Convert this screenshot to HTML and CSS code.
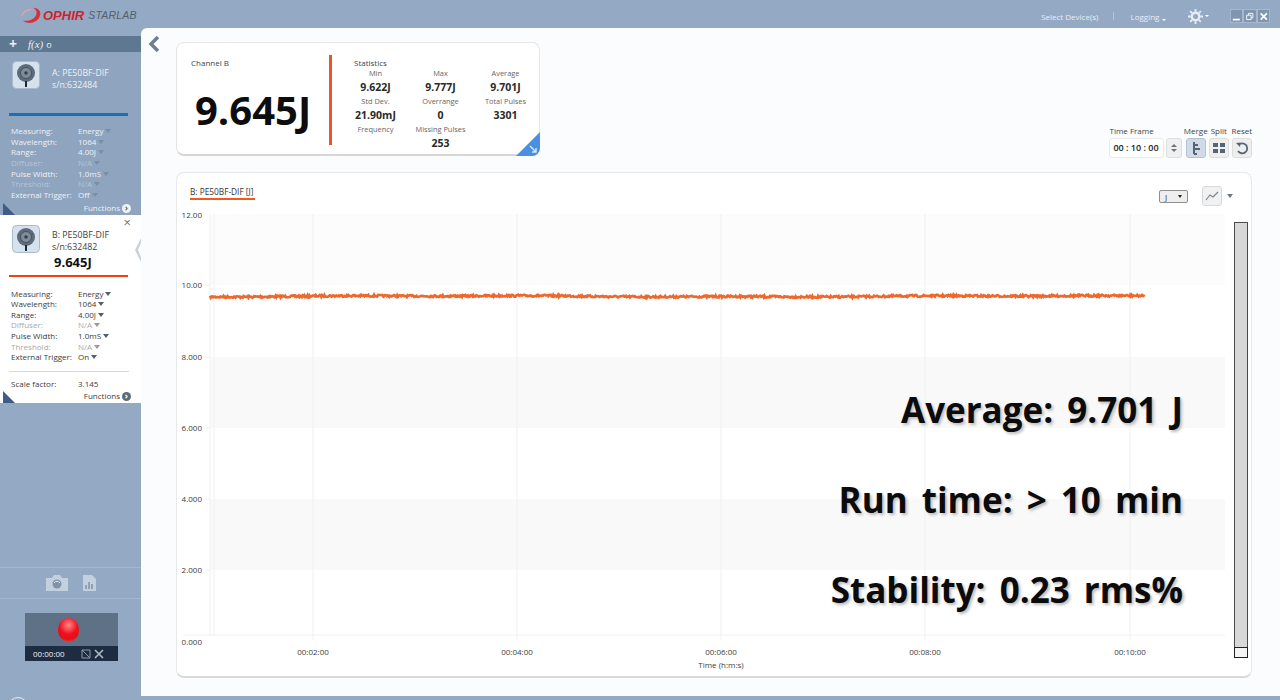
FILE: index.html
```html
<!DOCTYPE html>
<html lang="en">
<head>
    <meta charset="UTF-8">
    <title>StarLab</title>
    <link rel="stylesheet" href="styles.css">
</head>
<body>
    <svg class="defs" width="0" height="0">
        <symbol id="sensor" viewBox="0 0 28 28">
            <rect x="0.5" y="0.5" width="27" height="27" rx="4" fill="#d5e2ee" stroke="#a8bacb"/>
            <circle cx="14" cy="12" r="9" fill="#5d6b78"/>
            <circle cx="14" cy="12" r="5.5" fill="#7d8c99" stroke="#46525e"/>
            <circle cx="14" cy="12" r="1.8" fill="#38424c"/>
            <rect x="13" y="20" width="2" height="6" fill="#20262c"/>
        </symbol>
    </svg>

    <header class="topbar">
        <div class="logo">
            <svg class="logo-mark" width="22" height="22" viewBox="0 0 24 22">
                <path d="M2 17 C7 22 19 20 21 11 C22 6 18 3 13 3 C17 5 18 8 16 12 C13 17 6 18 2 17Z" fill="#d8313c"/>
                <path d="M1 12 C3 7 7 5 11 5" fill="none" stroke="#e8a0a4" stroke-width="1.5"/>
            </svg>
            <span class="logo-red">OPHIR</span>
            <span class="logo-grey">STARLAB</span>
        </div>
        <nav class="topnav">
            <span class="topnav-link">Select Device(s)</span>
            <span class="topnav-sep"></span>
            <span class="topnav-link">Logging <i class="mini-caret"></i></span>
            <span class="gear">
                <svg width="15" height="15" viewBox="0 0 16 16">
                    <circle cx="8" cy="8" r="4" fill="none" stroke="#e6ecf3" stroke-width="2.5"/>
                    <path d="M8 0V3M8 13V16M0 8H3M13 8H16M2.3 2.3L4.4 4.4M11.6 11.6L13.7 13.7M2.3 13.7L4.4 11.6M11.6 4.4L13.7 2.3" stroke="#e6ecf3" stroke-width="2"/>
                </svg>
                <i class="mini-caret"></i>
            </span>
            <div class="winbtns">
                <span class="winbtn"><svg width="13" height="13" viewBox="0 0 13 13"><path d="M2 10H10" stroke="#fff" stroke-width="2"/></svg></span>
                <span class="winbtn"><svg width="13" height="13" viewBox="0 0 13 13"><path d="M3 5H8V10H3ZM5 5V3H10V8H8" fill="none" stroke="#fff"/></svg></span>
                <span class="winbtn"><svg width="13" height="13" viewBox="0 0 13 13"><path d="M3 3L10 10M10 3L3 10" stroke="#fff" stroke-width="2"/></svg></span>
            </div>
        </nav>
    </header>

    <div class="app">
        <aside class="sidebar">
            <div class="side-tools">
                <span class="side-plus">+</span>
                <span class="side-fx">f(x)</span>
                <span class="side-o">o</span>
            </div>

            <section class="device device-a">
                <div class="device-head">
                    <svg class="sensor-icon" width="28" height="28"><use href="#sensor"/></svg>
                    <div class="device-name">
                        <div>A: PE50BF-DIF</div>
                        <div>s/n:632484</div>
                    </div>
                </div>
                <div class="device-bar bar-blue"></div>
                <dl class="params">
                    <dt>Measuring:</dt><dd>Energy<i class="caret"></i></dd>
                    <dt>Wavelength:</dt><dd>1064<i class="caret"></i></dd>
                    <dt>Range:</dt><dd>4.00J<i class="caret"></i></dd>
                    <dt class="off">Diffuser:</dt><dd class="off">N/A<i class="caret"></i></dd>
                    <dt>Pulse Width:</dt><dd>1.0mS<i class="caret"></i></dd>
                    <dt class="off">Threshold:</dt><dd class="off">N/A<i class="caret"></i></dd>
                    <dt>External Trigger:</dt><dd>Off<i class="caret"></i></dd>
                </dl>
                <div class="functions">Functions <i class="fn-dot">›</i></div>
                <i class="corner"></i>
            </section>

            <section class="device device-b">
                <span class="device-close">×</span>
                <i class="notch"></i>
                <div class="device-head">
                    <svg class="sensor-icon" width="28" height="28"><use href="#sensor"/></svg>
                    <div class="device-name">
                        <div>B: PE50BF-DIF</div>
                        <div>s/n:632482</div>
                        <div class="device-value">9.645J</div>
                    </div>
                </div>
                <div class="device-bar bar-orange"></div>
                <dl class="params">
                    <dt>Measuring:</dt><dd>Energy<i class="caret"></i></dd>
                    <dt>Wavelength:</dt><dd>1064<i class="caret"></i></dd>
                    <dt>Range:</dt><dd>4.00J<i class="caret"></i></dd>
                    <dt class="off">Diffuser:</dt><dd class="off">N/A<i class="caret"></i></dd>
                    <dt>Pulse Width:</dt><dd>1.0mS<i class="caret"></i></dd>
                    <dt class="off">Threshold:</dt><dd class="off">N/A<i class="caret"></i></dd>
                    <dt>External Trigger:</dt><dd>On<i class="caret"></i></dd>
                </dl>
                <div class="scale">
                    <span>Scale factor:</span><span>3.145</span>
                </div>
                <div class="functions">Functions <i class="fn-dot">›</i></div>
                <i class="corner"></i>
            </section>

            <div class="side-spacer"></div>

            <div class="side-actions">
                <svg width="24" height="18" viewBox="0 0 24 18">
                    <path d="M1 4H7L9 1H15L17 4H23V17H1Z" fill="#c3d0de"/>
                    <circle cx="12" cy="10" r="4.5" fill="#7f93a9"/>
                    <path d="M9 9A3.5 3.5 0 0 1 15 9" stroke="#dfe7ef" fill="none"/>
                </svg>
                <svg width="15" height="18" viewBox="0 0 15 18">
                    <path d="M1 1H10L14 5V17H1Z" fill="#c3d0de"/>
                    <path d="M4 15V11M7 15V8M10 15V10" stroke="#7f93a9" stroke-width="1.5"/>
                </svg>
            </div>

            <div class="recorder">
                <div class="rec-top"><span class="rec-ball"></span></div>
                <div class="rec-bottom">
                    <span>00:00:00</span>
                    <span class="rec-tools">
                        <svg width="10" height="10" viewBox="0 0 10 10"><path d="M1 1H9V9H1ZM1 1L9 9" fill="none" stroke="#8b99a8"/></svg>
                        <svg width="10" height="10" viewBox="0 0 10 10"><path d="M1 1L9 9M9 1L1 9" stroke="#aebbc8" stroke-width="1.6"/></svg>
                    </span>
                </div>
            </div>
        </aside>

        <main class="main">
            <svg class="back" width="14" height="18" viewBox="0 0 14 18">
                <path d="M11 2L4 9L11 16" fill="none" stroke="#6f7f90" stroke-width="3.5"/>
            </svg>

            <div class="main-head">
                <section class="stat-card">
                    <div class="stat-left">
                        <div class="small-title">Channel B</div>
                        <div class="big-value">9.645J</div>
                    </div>
                    <div class="stat-right">
                        <div class="small-title">Statistics</div>
                        <div class="stat-grid">
                            <div class="stat"><span>Min</span><b>9.622J</b></div>
                            <div class="stat"><span>Max</span><b>9.777J</b></div>
                            <div class="stat"><span>Average</span><b>9.701J</b></div>
                            <div class="stat"><span>Std Dev.</span><b>21.90mJ</b></div>
                            <div class="stat"><span>Overrange</span><b>0</b></div>
                            <div class="stat"><span>Total Pulses</span><b>3301</b></div>
                            <div class="stat"><span>Frequency</span></div>
                            <div class="stat"><span>Missing Pulses</span><b>253</b></div>
                        </div>
                    </div>
                    <span class="stat-corner">
                        <svg width="8" height="8" viewBox="0 0 8 8"><path d="M1 1L7 7M7 3V7H3" fill="none" stroke="#dbe9fa" stroke-width="1.4"/></svg>
                    </span>
                </section>

                <div class="controls">
                    <div class="ctl-time">
                        <label>Time Frame</label>
                        <div class="time-row">
                            <span class="time-box">00 : 10 : 00</span>
                            <span class="spin"><i class="spin-up"></i><i class="spin-down"></i></span>
                        </div>
                    </div>
                    <div class="ctl">
                        <label>Merge</label>
                        <span class="ctl-btn is-on">
                            <svg width="14" height="14" viewBox="0 0 14 14"><path d="M5 1V13M5 4H9M5 8H11M5 13H8" fill="none" stroke="#566574" stroke-width="2"/></svg>
                        </span>
                    </div>
                    <div class="ctl">
                        <label>Split</label>
                        <span class="ctl-btn">
                            <svg width="14" height="12" viewBox="0 0 14 12"><path d="M1 1H6V5H1ZM8 1H13V5H8ZM1 7H6V11H1ZM8 7H13V11H8Z" fill="#566574"/></svg>
                        </span>
                    </div>
                    <div class="ctl">
                        <label>Reset</label>
                        <span class="ctl-btn">
                            <svg width="14" height="14" viewBox="0 0 14 14"><path d="M3.5 4A5 5 0 1 1 3 10" fill="none" stroke="#566574" stroke-width="1.8"/><path d="M1 2L5.5 1.5L5 6Z" fill="#566574"/></svg>
                        </span>
                    </div>
                </div>
            </div>

            <section class="chart-card">
                <div class="chart-head">
                    <span class="legend">B: PE50BF-DIF [J]</span>
                    <div class="chart-tools">
                        <span class="unit-select">J <i class="caret caret-dark"></i></span>
                        <span class="type-btn">
                            <svg width="14" height="10" viewBox="0 0 14 10"><path d="M1 9L5 4L8 6L13 1" fill="none" stroke="#7b8792" stroke-width="1.2"/></svg>
                        </span>
                        <i class="caret caret-grey"></i>
                    </div>
                </div>
                <svg class="plot" id="plot" width="1076" height="470" viewBox="176 207 1076 470">
                    <rect class="band band-top" x="210" y="214" width="1015" height="71"/>
                    <rect class="band" x="210" y="357" width="1015" height="71"/>
                    <rect class="band" x="210" y="499" width="1015" height="71"/>
                    <path class="grid" d="M210 214V635M214 214V635M313 214V640M517 214V640M721 214V640M925 214V640M1130 214V640M205 285H210M205 357H210M205 428H210M205 499H210M205 570H210M183 635H1225"/>
                    <text class="ylab" x="202" y="218">12.00</text>
                    <text class="ylab" x="202" y="288">10.00</text>
                    <text class="ylab" x="202" y="360">8.000</text>
                    <text class="ylab" x="202" y="431">6.000</text>
                    <text class="ylab" x="202" y="502">4.000</text>
                    <text class="ylab" x="202" y="573">2.000</text>
                    <text class="ylab" x="202" y="645">0.000</text>
                    <text class="xlab" x="313" y="655">00:02:00</text>
                    <text class="xlab" x="517" y="655">00:04:00</text>
                    <text class="xlab" x="721" y="655">00:06:00</text>
                    <text class="xlab" x="925" y="655">00:08:00</text>
                    <text class="xlab" x="1130" y="655">00:10:00</text>
                    <text class="xlab" x="721" y="668">Time (h:m:s)</text>
                    <path class="series" id="series" d=""/>
                    <rect class="scroll" x="1234.5" y="222.5" width="13" height="435"/>
                    <rect class="scroll-thumb" x="1234.5" y="647.5" width="13" height="10"/>
                </svg>
                <div class="overlay">
                    <p>Average: 9.701 J</p>
                    <p>Run time: &gt; 10 min</p>
                    <p>Stability: 0.23 rms%</p>
                </div>
            </section>
        </main>
    </div>
    <span class="help-arc"></span>

    <script src="chart.js"></script>
</body>
</html>
```

FILE: styles.css
```css
:root {
    --side: #94a9c3;
    --side-dark: #5f7891;
    --orange: #f05a1e;
    --text: #333;
    --muted: #6d6d6d;
}

* {
    box-sizing: border-box;
}

html, body {
    height: 100%;
}

body {
    margin: 0;
    width: 1280px;
    height: 700px;
    overflow: hidden;
    position: relative;
    display: flex;
    flex-direction: column;
    background: var(--side);
    color: var(--text);
    font-family: "Open Sans", "Noto Sans", sans-serif;
    font-size: 8px;
}

.defs {
    position: absolute;
}

/* top bar */
.topbar {
    height: 28px;
    flex: none;
    display: flex;
    justify-content: space-between;
    align-items: center;
}

.logo {
    display: flex;
    align-items: center;
    padding: 0 0 0 21px;
    margin-top: 2px;
    font-family: "Liberation Sans", sans-serif;
    font-style: italic;
}

.logo-red {
    color: #d21f2b;
    font-size: 13px;
    font-weight: 700;
    margin-right: 4px;
}

.logo-grey {
    color: #51606f;
    font-size: 10.5px;
    letter-spacing: 0.2px;
}

.topnav {
    display: flex;
    align-items: center;
    color: #e8eef5;
    font-size: 8px;
    padding-right: 10px;
    height: 100%;
    padding-top: 4px;
}

.topnav-link {
    white-space: nowrap;
}

.topnav-sep {
    width: 1px;
    height: 8px;
    background: #b5c5d7;
    margin: 0 16px 0 15px;
}

.mini-caret {
    display: inline-block;
    border: 2.5px solid transparent;
    border-top-color: #fff;
    border-bottom: 0;
    vertical-align: -1px;
}

.gear {
    display: flex;
    align-items: center;
    gap: 2px;
    margin-left: 22px;
    margin-right: 21px;
}

.winbtns {
    display: flex;
}

.winbtn {
    width: 13.5px;
    height: 14px;
    background: #7f96b1;
    border: 1px solid #a6b8cd;
    display: flex;
    align-items: center;
    justify-content: center;
}

/* sidebar + main */
.app {
    flex: 1;
    display: flex;
    padding-bottom: 4px;
    min-height: 0;
}

.sidebar {
    width: 141px;
    flex: none;
    display: flex;
    flex-direction: column;
    padding-top: 8px;
}

.side-tools {
    height: 16px;
    flex: none;
    background: var(--side-dark);
    color: #e8eef4;
    display: flex;
    align-items: center;
    padding-left: 9px;
    gap: 11px;
    font-size: 9px;
}

.side-plus {
    font-size: 14px;
    font-weight: 700;
    line-height: 1;
}

.side-fx {
    font-family: "Liberation Serif", serif;
    font-style: italic;
    font-size: 11px;
    margin-right: -8px;
}

.device {
    position: relative;
    flex: none;
}

.device-a {
    height: 163px;
    color: #eef2f7;
    background: #8ea4bf;
}

.device-b {
    height: 188px;
    color: #3d3d3d;
    background: #fff;
}

.device-head {
    display: flex;
    padding: 10px 0 0 12px;
    gap: 12px;
    height: 61px;
}

.device-a .device-head {
    padding-top: 9px;
}

.device-b .device-head {
    height: 60px;
}

.device-name {
    font-size: 8.8px;
    line-height: 12px;
    padding-top: 6px;
}

.device-b .device-name {
    padding-top: 4px;
    line-height: 12px;
}

.device-value {
    font-size: 13px;
    font-weight: 700;
    color: #111;
    line-height: 18px;
    margin: 0 0 0 2px;
}

.device-bar {
    height: 3px;
    margin: 0 13px 0 9px;
}

.bar-blue {
    background: #1a70b8;
}

.bar-orange {
    background: #f2410f;
    height: 2px;
}

.params {
    display: grid;
    grid-template-columns: 67px 1fr;
    grid-auto-rows: 10.65px;
    margin: 10px 0 0 11px;
    font-size: 8px;
    line-height: 10.65px;
}

.device-b .params {
    margin-top: 11.5px;
}

.params dt,
.params dd {
    margin: 0;
    white-space: nowrap;
}

.device-a .off {
    color: #b4c4d6;
}

.device-b .off {
    color: #a8a8a8;
}

.caret {
    display: inline-block;
    border: 3px solid transparent;
    border-top: 4px solid #565f68;
    border-bottom: 0;
    margin-left: 2px;
    vertical-align: 1px;
}

.device-a .caret {
    border-top-color: #7d8ea2;
}

.device-b .off .caret {
    border-top-color: #9a9a9a;
}

.scale {
    margin: 8px 12px 0 9px;
    border-top: 1px solid #d8d8d8;
    padding: 7px 0 0 2px;
    display: grid;
    grid-template-columns: 67px 1fr;
    line-height: 10px;
}

.functions {
    position: absolute;
    right: 10px;
    bottom: 2px;
    display: flex;
    align-items: center;
    gap: 2px;
    font-size: 8px;
    line-height: 10px;
}

.fn-dot {
    width: 9px;
    height: 9px;
    border-radius: 50%;
    background: #5b6c7d;
    color: #fff;
    font-style: normal;
    font-weight: 700;
    font-size: 9px;
    line-height: 7px;
    text-align: center;
}

.device-a .fn-dot {
    background: #eef2f7;
    color: #5b6c7d;
}

.corner {
    position: absolute;
    left: 3px;
    bottom: 0;
    border-left: 12px solid #3f5c86;
    border-top: 12px solid transparent;
}

.device-close {
    position: absolute;
    right: 10px;
    top: 1px;
    font-size: 13px;
    line-height: 13px;
    color: #66707a;
}

.notch {
    position: absolute;
    right: 0;
    top: 23px;
    width: 6px;
    height: 24px;
    background: #c9d1da;
    clip-path: polygon(100% 0, 0 50%, 100% 100%, 100% 80%, 50% 50%, 100% 20%);
}

.side-spacer {
    flex: 1;
}

.side-actions {
    height: 32px;
    flex: none;
    display: flex;
    align-items: center;
    justify-content: center;
    gap: 13px;
    margin-bottom: 14px;
    border-top: 1px solid #a5b7cc;
    border-bottom: 1px solid #a5b7cc;
}

.recorder {
    width: 93px;
    height: 48px;
    margin: 0 0 35px 25px;
    flex: none;
    display: flex;
    flex-direction: column;
}

.rec-top {
    flex: 1;
    background: #5f7186;
    display: flex;
    align-items: center;
    justify-content: center;
}

.rec-ball {
    width: 21px;
    height: 24px;
    margin-left: -6px;
    border-radius: 50%;
    background: radial-gradient(circle at 50% 30%, #ff8a8a 0, #f0101c 45%, #e0101a 70%, #ff5a60 100%);
}

.rec-bottom {
    height: 15px;
    background: #1d2c42;
    color: #f1f1f1;
    display: flex;
    justify-content: space-between;
    align-items: center;
    padding: 0 14px 0 8px;
    font-size: 8px;
}

.rec-tools {
    display: flex;
    gap: 3px;
}

.help-arc {
    position: absolute;
    left: 8px;
    top: 697px;
    width: 20px;
    height: 20px;
    border-radius: 50%;
    border: 1px solid #e6ecf3;
}

.main {
    flex: 1;
    position: relative;
    background: #fbfcfd;
    border-top-left-radius: 6px;
    display: flex;
    flex-direction: column;
    padding: 14px 28px 18px 35px;
    min-width: 0;
}

.back {
    position: absolute;
    left: 6px;
    top: 7px;
}

.main-head {
    display: flex;
    justify-content: space-between;
    align-items: flex-end;
    margin-bottom: 16px;
    flex: none;
}

/* stat card */
.stat-card {
    width: 364px;
    height: 114px;
    position: relative;
    background: #fff;
    border: 1px solid #e6e6e6;
    border-bottom: 2px solid #d6d6d6;
    border-radius: 8px;
    display: flex;
}

.stat-left {
    width: 155px;
    padding: 14px 0 0 14px;
    position: relative;
}

.stat-left::after {
    content: "";
    position: absolute;
    right: 0;
    top: 12px;
    width: 3px;
    height: 90px;
    background: #e8572a;
}

.small-title {
    font-size: 8px;
    line-height: 11px;
    color: #444;
}

.big-value {
    font-size: 40px;
    font-weight: 700;
    color: #0d0d0d;
    line-height: 50px;
    margin: 17px 0 0 4px;
}

.stat-right {
    flex: 1;
    padding: 14px 0 0 22px;
    position: relative;
}

.stat-grid {
    display: grid;
    grid-template-columns: repeat(3, 65px);
    grid-auto-rows: 28px;
    margin: 0 0 0 -11px;
}

.stat {
    display: flex;
    flex-direction: column;
    align-items: center;
    line-height: 11px;
    color: #666;
    font-size: 7.4px;
    white-space: nowrap;
}

.stat b {
    font-size: 10.5px;
    line-height: 16px;
    color: #2a2a2a;
    font-weight: 700;
}

.stat-corner {
    position: absolute;
    right: -1px;
    bottom: -2px;
    width: 24px;
    height: 24px;
    background: #4a90e2;
    clip-path: polygon(100% 0, 100% 100%, 0 100%);
    border-bottom-right-radius: 8px;
    display: flex;
    align-items: flex-end;
    justify-content: flex-end;
    padding: 0 3px 3px 0;
}

/* time frame and view buttons */
.controls {
    display: flex;
    gap: 2.5px;
    margin-bottom: -2px;
}

.ctl {
    width: 20.5px;
    display: flex;
    flex-direction: column;
    align-items: center;
}

.ctl-time {
    margin-right: 1.5px;
}

.ctl label,
.ctl-time label {
    display: block;
    font-size: 8px;
    line-height: 11px;
    color: #444;
    margin-bottom: 2px;
    white-space: nowrap;
}

.ctl-time label {
    margin-left: 1px;
}

.time-row {
    display: flex;
    gap: 2px;
}

.time-box {
    width: 55px;
    height: 20px;
    background: #fff;
    border: 1px solid #eaeaea;
    border-radius: 3px;
    font-size: 9px;
    font-weight: 600;
    line-height: 18px;
    text-align: center;
    color: #222;
}

.spin {
    width: 16px;
    height: 20px;
    background: #f0f0f0;
    border: 1px solid #dfdfdf;
    border-radius: 3px;
    display: flex;
    flex-direction: column;
    align-items: center;
    justify-content: center;
    gap: 2px;
}

.spin-up {
    border: 3.5px solid transparent;
    border-bottom: 3px solid #6a7580;
    border-top: 0;
}

.spin-down {
    border: 3.5px solid transparent;
    border-top: 3px solid #6a7580;
    border-bottom: 0;
}

.ctl-btn {
    width: 20.5px;
    height: 20px;
    flex: none;
    background: #eeeeee;
    border: 1px solid #dedede;
    border-radius: 3px;
    display: flex;
    align-items: center;
    justify-content: center;
}

.ctl-btn.is-on {
    background: #cfdbe9;
    border-color: #b3c3d6;
}

/* chart */
.chart-card {
    flex: 1;
    position: relative;
    background: #fff;
    border: 1px solid #e8e8e8;
    border-bottom: 2px solid #d9d9d9;
    border-radius: 8px;
    min-height: 0;
}

.chart-head {
    height: 34px;
    position: relative;
    z-index: 1;
    display: flex;
    justify-content: space-between;
    align-items: flex-start;
    padding: 12px 18px 0 13px;
}

.legend {
    font-size: 8.3px;
    line-height: 13px;
    color: #333;
    border-bottom: 2px solid var(--orange);
    padding-right: 1px;
}

.chart-tools {
    display: flex;
    align-items: center;
    margin-top: 1px;
}

.unit-select {
    width: 29px;
    height: 13px;
    background: #eee;
    border: 1px solid #8f8f8f;
    border-radius: 2px;
    font-size: 8px;
    line-height: 11px;
    display: flex;
    justify-content: space-between;
    align-items: center;
    padding: 0 5px;
    margin-right: 14px;
}

.caret-dark {
    border-width: 2.5px;
    border-top: 3px solid #222;
    border-bottom: 0;
    margin: 0;
    vertical-align: 0;
}

.type-btn {
    width: 20px;
    height: 20px;
    background: #f1f1f1;
    border: 1px solid #d9d9d9;
    border-radius: 3px;
    display: flex;
    align-items: center;
    justify-content: center;
    margin-right: 5px;
}

.caret-grey {
    border-top-color: #6d7782;
    margin: 0;
}

.plot {
    display: block;
    position: absolute;
    left: -1px;
    top: 34px;
}

.band {
    fill: #f9f9f9;
}

.band-top {
    fill: #fcfcfc;
}

.grid {
    fill: none;
    stroke: #f0f0f0;
    stroke-width: 1;
}

.ylab,
.xlab {
    font-size: 8px;
    fill: #3d3d3d;
    font-family: "Open Sans", sans-serif;
}

.ylab {
    text-anchor: end;
}

.xlab {
    text-anchor: middle;
}

.series {
    fill: none;
    stroke: #f0672b;
    stroke-width: 2.6;
}

.scroll {
    fill: #d8d8d8;
    stroke: #4a4a4a;
}

.scroll-thumb {
    fill: #f4f4f4;
    stroke: #222;
}

.overlay {
    position: absolute;
    right: 68px;
    top: 213px;
    text-align: right;
    font-family: "Open Sans", sans-serif;
    font-size: 35px;
    font-weight: 700;
    color: #0b0b0b;
    word-spacing: 5px;
    text-shadow: 2px 2px 3px #bdbdbd;
}

.overlay p {
    margin: 0 0 42px;
    line-height: 48px;
}
```

FILE: chart.js
```js
// noisy trace for the energy series, seeded so every run looks the same
var seed = 7;
function rnd() {
    seed = (seed * 16807) % 2147483647;
    return seed / 2147483647;
}

var d = '';
for (var x = 210; x <= 1145; x += 0.8) {
    var drift = Math.sin(x / 95) * 0.5 + Math.sin(x / 31) * 0.3;
    var y = 296.3 + drift + (rnd() - 0.5) * 2;
    d += (d ? 'L' : 'M') + x.toFixed(1) + ' ' + y.toFixed(1);
}
document.getElementById('series').setAttribute('d', d);
```
